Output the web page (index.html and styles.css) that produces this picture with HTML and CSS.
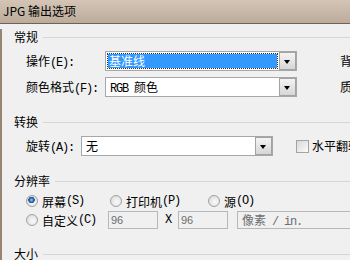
FILE: index.html
```html
<!DOCTYPE html>
<html lang="zh-CN">
<head>
  <meta charset="UTF-8" />
  <title>JPG 输出选项</title>
  <link rel="stylesheet" href="styles.css">
</head>
<body>

<div class="titlebar">JPG 输出选项</div>

<div class="dialog">
  <div class="group-head">常规</div>

  <div class="row first">
    <span class="lbl lbl-wide">操作<span class="k">(E):</span></span>
    <div class="combo">
      <div class="combo-val sel">基准线</div>
      <div class="combo-btn"></div>
    </div>
    <span class="side">背景<span class="k">(B):</span></span>
  </div>

  <div class="row">
    <span class="lbl lbl-wide">颜色格式<span class="k">(F):</span></span>
    <div class="combo">
      <div class="combo-val"><span class="k">RGB </span>颜色</div>
      <div class="combo-btn"></div>
    </div>
    <span class="side">质量<span class="k">(Q):</span></span>
  </div>

  <div class="group-head gap">转换</div>

  <div class="row first">
    <span class="lbl lbl-narrow">旋转<span class="k">(A):</span></span>
    <div class="combo">
      <div class="combo-val">无</div>
      <div class="combo-btn"></div>
    </div>
    <span class="check"></span>
    <span class="check-text">水平翻转<span class="k">(H)</span></span>
  </div>

  <div class="group-head gap">分辨率</div>

  <div class="row radios">
    <span class="opt col1"><span class="radio on"></span>屏幕<span class="k">(S)</span></span>
    <span class="opt col2"><span class="radio"></span>打印机<span class="k">(P)</span></span>
    <span class="opt"><span class="radio"></span>源<span class="k">(O)</span></span>
  </div>

  <div class="row custom">
    <span class="opt col-custom"><span class="radio"></span>自定义<span class="k">(C)</span></span>
    <span class="field num">96</span>
    <span class="times k">X</span>
    <span class="field num">96</span>
    <span class="field unit">像素<span class="k"> / in.</span></span>
  </div>

  <div class="group-head gap">大小</div>
</div>

</body>
</html>
```

FILE: styles.css
```css
body {
  margin: 0;
  width: 350px;
  height: 260px;
  overflow: hidden;
  background: #f0f0f0;
  color: #000;
  font-family: "Noto Sans CJK SC", sans-serif;
  font-size: 12px;
}
.titlebar {
  height: 23px;
  line-height: 21px;
  padding-left: 3px;
  white-space: nowrap;
  background: linear-gradient(to bottom, #d4c5b6, #bcab9b);
  border-bottom: 1px solid #6e6259;
}
.dialog {
  height: 236px;
  border-left: 2px solid #978472;
  padding-left: 12px;
  box-sizing: border-box;
}
.k {
  font-family: "Liberation Mono", monospace;
  font-size: 12px;
  letter-spacing: -1.2px;
}
.group-head {
  display: flex;
  align-items: center;
  height: 16px;
  line-height: 16px;
  margin-top: 5px;
  white-space: nowrap;
}
.group-head::after {
  content: "";
  flex: 1;
  border-top: 1px solid #d6d6d6;
  margin-left: 5px;
}
.group-head.gap {
  margin-top: 17px;
}
.row {
  display: flex;
  align-items: center;
  padding-left: 12px;
  margin-top: 6px;
  white-space: nowrap;
}
.lbl {
  flex-shrink: 0;
}
.lbl-wide {
  width: 79px;
}
.lbl-narrow {
  width: 55px;
}
.combo {
  flex-shrink: 0;
  display: flex;
  width: 192px;
  height: 20px;
  box-sizing: border-box;
  border: 1px solid #a5a7aa;
  background: #fff;
}
.combo-val {
  flex: 1;
  margin: 2px;
  padding-left: 2px;
  line-height: 14px;
}
.combo-val.sel {
  background: #3399ff;
  color: #fff;
  outline: 1px dotted #333;
  padding-left: 1px;
}
.combo-btn {
  position: relative;
  width: 17px;
  height: 18px;
  box-sizing: border-box;
  border: 1px solid #a3a3a3;
  background: linear-gradient(to bottom, #f4f4f4, #d6d6d6);
}
.combo-btn::after {
  content: "";
  position: absolute;
  left: 4px;
  top: 7px;
  border-left: 3.5px solid transparent;
  border-right: 3.5px solid transparent;
  border-top: 4px solid #000;
}
.side {
  flex-shrink: 0;
  margin-left: 43px;
}
.check {
  flex-shrink: 0;
  width: 13px;
  height: 13px;
  box-sizing: border-box;
  margin-left: 23px;
  border: 1px solid #a3a3a3;
  background: linear-gradient(135deg, #d8d8d8, #fbfbfb);
}
.check-text {
  flex-shrink: 0;
  margin-left: 3px;
}
.radios {
  height: 16px;
  margin-top: 4px;
}
.custom {
  margin-top: 2px;
}
.opt {
  flex-shrink: 0;
  display: inline-flex;
  align-items: center;
}
.col1 {
  width: 84px;
}
.col2 {
  width: 98px;
}
.col-custom {
  width: 82px;
}
.radio {
  width: 12px;
  height: 12px;
  box-sizing: border-box;
  margin-right: 4px;
  border: 1px solid #a0a0a0;
  border-radius: 50%;
  background: radial-gradient(circle at 60% 60%, #fafafa, #d6d6d6);
}
.radio.on {
  background:
    radial-gradient(circle at 45% 40%, #a6d0f6 0, #2e6db8 2px, #1d4f92 3px, transparent 3.5px),
    radial-gradient(circle at 60% 60%, #fafafa, #d6d6d6);
}
.field {
  flex-shrink: 0;
  height: 18px;
  line-height: 16px;
  box-sizing: border-box;
  border: 1px solid #b4b8bd;
  background: #f0f0f0;
  color: #6d6d6d;
}
.num {
  width: 50px;
  padding-left: 2px;
  font-family: "Liberation Sans", sans-serif;
  font-size: 11px;
}
.times {
  flex-shrink: 0;
  width: 6px;
  margin: 0 7px;
}
.unit {
  width: 130px;
  margin-left: 9px;
  padding-left: 4px;
}
```
